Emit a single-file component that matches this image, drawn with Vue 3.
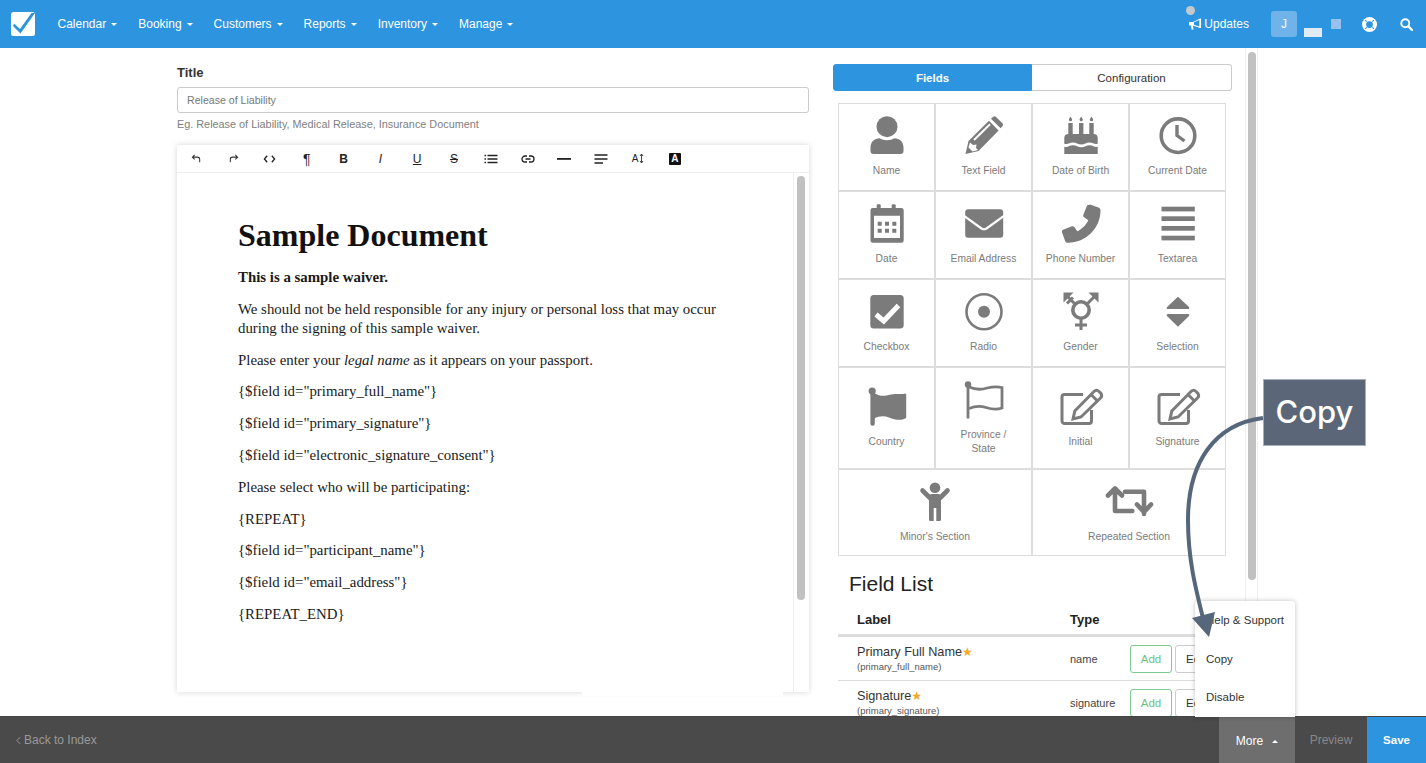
<script setup>
const navItems = ['Calendar', 'Booking', 'Customers', 'Reports', 'Inventory', 'Manage']

const paragraphs = [
  '{$field id="primary_full_name"}',
  '{$field id="primary_signature"}',
  '{$field id="electronic_signature_consent"}',
  'Please select who will be participating:',
  '{REPEAT}',
  '{$field id="participant_name"}',
  '{$field id="email_address"}',
  '{REPEAT_END}'
]

const fields = [
  { label: 'Primary Full Name', key: '(primary_full_name)', type: 'name' },
  { label: 'Signature', key: '(primary_signature)', type: 'signature' }
]
</script>

<template>
  <div class="page">
    <header class="topbar">
      <div class="logo">
        <svg viewBox="0 0 24 24" width="24" height="24">
          <rect width="24" height="24" rx="2.5" fill="#fff" />
          <path d="M3 11.5 l6 5.5 L20.5 1 h3.5 L9.5 21.5 L2 14 Z" fill="#2d95e0" />
        </svg>
      </div>
      <nav class="nav">
        <a v-for="item in navItems" :key="item" class="nav-item">{{ item }}<i class="caret"></i></a>
      </nav>
      <div class="top-right">
        <div class="updates">
          <span class="dot"></span>
          <svg viewBox="0 0 14 14" width="14" height="14">
            <path d="M1 5 L5 5 L12 1.5 L13 1.5 L13 11 L12 11 L5 8.5 L5.5 12.5 L3.5 12.5 L3 8.5 L1 8.5 Z" fill="#fff" />
            <path d="M6 5.3 L11.3 3 L11.3 9.5 L6 7.7 Z" fill="#2d95e0" />
          </svg>
          <span>Updates</span>
        </div>
        <div class="avatar">J</div>
        <span class="ghost-bar"></span>
        <span class="ghost-square"></span>
        <svg class="lifering" viewBox="0 0 16 16" width="15" height="15">
          <circle cx="8" cy="8" r="8" fill="#fff" />
          <circle cx="8" cy="8" r="3.6" fill="#2d95e0" />
          <path d="M3.4 3.4 L5 5 M12.6 3.4 L11 5 M3.4 12.6 L5 11 M12.6 12.6 L11 11" stroke="#2d95e0" stroke-width="1.2" />
        </svg>
        <svg class="search" viewBox="0 0 14 14" width="13" height="13">
          <circle cx="5.7" cy="5.7" r="4.3" fill="none" stroke="#fff" stroke-width="2" />
          <path d="M9 9 L13 13" stroke="#fff" stroke-width="2.4" stroke-linecap="round" />
        </svg>
      </div>
    </header>

    <main class="content">
      <section class="left">
        <label class="title-label">Title</label>
        <div class="title-input">Release of Liability</div>
        <p class="hint">Eg. Release of Liability, Medical Release, Insurance Document</p>

        <div class="editor">
          <div class="toolbar">
            <span class="tool">
              <svg viewBox="0 0 12 12" width="11" height="11"><path d="M4 2 L1.5 4.5 L4 7 M1.5 4.5 H7 Q9.5 4.5 9.5 7 V10" fill="none" stroke="#333" stroke-width="1.1" /></svg>
            </span>
            <span class="tool">
              <svg viewBox="0 0 12 12" width="11" height="11"><path d="M8 2 L10.5 4.5 L8 7 M10.5 4.5 H5 Q2.5 4.5 2.5 7 V10" fill="none" stroke="#333" stroke-width="1.1" /></svg>
            </span>
            <span class="tool">
              <svg viewBox="0 0 14 10" width="13" height="10"><path d="M4.5 1.5 L1.5 5 L4.5 8.5 M9.5 1.5 L12.5 5 L9.5 8.5" fill="none" stroke="#222" stroke-width="1.4" /></svg>
            </span>
            <span class="tool tool-text para">¶</span>
            <span class="tool tool-text bold">B</span>
            <span class="tool tool-text italic">I</span>
            <span class="tool tool-text underline">U</span>
            <span class="tool tool-text strike">S</span>
            <span class="tool">
              <svg viewBox="0 0 14 10" width="14" height="10"><path d="M0.5 1.5 H2 M0.5 5 H2 M0.5 8.5 H2 M3.5 1.5 H13.5 M3.5 5 H13.5 M3.5 8.5 H13.5" stroke="#222" stroke-width="1.4" /></svg>
            </span>
            <span class="tool">
              <svg viewBox="0 0 14 10" width="14" height="10"><path d="M6 2 H4 a3 3 0 0 0 0 6 H6 M8 2 H10 a3 3 0 0 1 0 6 H8 M4.5 5 H9.5" fill="none" stroke="#222" stroke-width="1.3" /></svg>
            </span>
            <span class="tool">
              <svg viewBox="0 0 14 4" width="14" height="4"><rect y="1" width="14" height="1.8" fill="#222" /></svg>
            </span>
            <span class="tool">
              <svg viewBox="0 0 14 10" width="14" height="10"><path d="M0.5 1 H13.5 M0.5 5 H13.5 M0.5 9 H9" stroke="#222" stroke-width="1.5" /></svg>
            </span>
            <span class="tool tool-size">A<svg viewBox="0 0 5 11" width="5" height="11"><path d="M2.5 1 V10 M1 3 L2.5 1 L4 3 M1 8 L2.5 10 L4 8" fill="none" stroke="#333" stroke-width="0.9" /></svg></span>
            <span class="tool"><span class="color-a">A</span></span>
          </div>
          <div class="editor-body">
            <article class="doc">
              <h1>Sample Document</h1>
              <p><strong>This is a sample waiver.</strong></p>
              <p>We should not be held responsible for any injury or personal loss that may occur during the signing of this sample waiver.</p>
              <p>Please enter your <em>legal name</em> as it appears on your passport.</p>
              <p v-for="text in paragraphs" :key="text">{{ text }}</p>
            </article>
            <div class="editor-scroll"><span class="editor-thumb"></span></div>
          </div>
          <span class="editor-tab"></span>
        </div>
      </section>

      <section class="right">
        <div class="tabs">
          <div class="tab active">Fields</div>
          <div class="tab">Configuration</div>
        </div>

        <div class="field-grid">
          <div class="cell">
            <svg viewBox="0 0 40 40" width="40" height="40"><circle cx="20" cy="11.7" r="10.5" /><path d="M3.5 36 v-3.5 c0-5.5 4-9.2 9-9.2 c2 1 4.7 2 7.5 2 s5.5-1 7.5-2 c5 0 9 3.7 9 9.2 V36 a3 3 0 0 1-3 3 H6.5 a3 3 0 0 1-3-3 z" /></svg>
            <span>Name</span>
          </div>
          <div class="cell">
            <svg viewBox="0 0 40 40" width="40" height="40"><path d="M1.5 39 L4.5 26 L25 5.8 L34.6 15.4 L14.5 36 Z" /><path d="M27 3.8 L29.2 1.8 a2 2 0 0 1 2.6 0 L38.6 8.4 a2 2 0 0 1 0 2.6 L36.6 13.2 Z" /><path d="M10 25 L26 9.3" stroke="#fff" stroke-width="2" /><path d="M4.5 32.5 L6 27.5 L9 30 L12.5 29.5 L12 33 L14 35 L8.5 36.5 Z" fill="#fff" /></svg>
            <span>Text Field</span>
          </div>
          <div class="cell">
            <svg viewBox="0 0 40 40" width="40" height="40"><path d="M9.5 1.7 c1 1.2 1.6 2.2 1.6 3 a1.6 1.6 0 0 1-3.2 0 c0-.8.6-1.8 1.6-3 z M20.2 1.7 c1 1.2 1.6 2.2 1.6 3 a1.6 1.6 0 0 1-3.2 0 c0-.8.6-1.8 1.6-3 z M30.5 1.7 c1 1.2 1.6 2.2 1.6 3 a1.6 1.6 0 0 1-3.2 0 c0-.8.6-1.8 1.6-3 z" /><rect x="7.3" y="8" width="4.4" height="12" /><rect x="18" y="8" width="4.4" height="12" /><rect x="28.3" y="8" width="4.4" height="12" /><path d="M3.3 23 a4 4 0 0 1 4-4 h25.4 a4 4 0 0 1 4 4 v5.8 c-3 1-5 -1.3-8.2-1.3 s-5 2-8.2 2 s-5-2-8.4-2 s-5 2.3-8.6 1.3 z" /><path d="M3.3 31.8 c3.6 1 5.2-1.5 8.6-1.5 s5 2 8.4 2 s5-2 8.2-2 s5 2.2 8.2 1.5 V39 H3.3 z" /></svg>
            <span>Date of Birth</span>
          </div>
          <div class="cell">
            <svg viewBox="0 0 40 40" width="40" height="40"><circle cx="20" cy="20.7" r="16.8" fill="none" stroke="#7b7b7b" stroke-width="3.6" /><path d="M19 10 V20.5 L26.5 26" fill="none" stroke="#7b7b7b" stroke-width="3.4" /></svg>
            <span>Current Date</span>
          </div>

          <div class="cell">
            <svg viewBox="0 0 40 40" width="40" height="40" fill-rule="evenodd"><rect x="9.7" y="1.3" width="4" height="8" rx="1.2" /><rect x="24.7" y="1.3" width="4" height="8" rx="1.2" /><path d="M5.8 5 H34.4 a2.3 2.3 0 0 1 2.3 2.3 V37.4 a2.3 2.3 0 0 1-2.3 2.3 H5.8 a2.3 2.3 0 0 1-2.3-2.3 V7.3 a2.3 2.3 0 0 1 2.3-2.3 z M7 12.7 V35 H33 V12.7 z" /><path d="M10.7 18.7 h4 v4 h-4 z M18 18.7 h4 v4 h-4 z M25.3 18.7 h4 v4 h-4 z M10.7 25.7 h4 v4 h-4 z M18 25.7 h4 v4 h-4 z M25.3 25.7 h4 v4 h-4 z" /></svg>
            <span>Date</span>
          </div>
          <div class="cell">
            <svg viewBox="0 0 40 40" width="40" height="40"><rect x="1.2" y="6.3" width="38" height="28.4" rx="3" /><path d="M0 13 L17.5 25.5 Q20 27 22.5 25.5 L40 13" fill="none" stroke="#fff" stroke-width="2.2" /></svg>
            <span>Email Address</span>
          </div>
          <div class="cell">
            <svg viewBox="0 0 40 40" width="40" height="40"><path d="M29 1.5 l8.5 3 c1.5 .5 2 1.5 2 3 C39.5 25 25 39.7 7 39.7 c-1.5 0-2.5-.5-3-2 l-3-8.5 c-.3-1 0-2 1-2.4 l9-3.5 c1-.4 1.8 0 2.3.8 l3 4.2 c4.5-2 9-6.5 11-11 l-4.2-3 c-.8-.5-1.2-1.3-.8-2.3 l3.5-9 c.4-1 1.4-1.3 2.2-.9 z" /></svg>
            <span>Phone Number</span>
          </div>
          <div class="cell">
            <svg viewBox="0 0 40 40" width="40" height="40"><rect x="3.5" y="3.7" width="33.3" height="4.7" /><rect x="3.5" y="13.3" width="33.3" height="4.7" /><rect x="3.5" y="23" width="33.3" height="4.7" /><rect x="3.5" y="32.7" width="33.3" height="4.7" /></svg>
            <span>Textarea</span>
          </div>

          <div class="cell">
            <svg viewBox="0 0 40 40" width="40" height="40"><rect x="3.3" y="4" width="33.4" height="33.4" rx="3.5" /><path d="M9 23.5 L16.7 30 L31.5 14.5" fill="none" stroke="#fff" stroke-width="5" /></svg>
            <span>Checkbox</span>
          </div>
          <div class="cell">
            <svg viewBox="0 0 40 40" width="40" height="40"><circle cx="20" cy="20.7" r="17.5" fill="none" stroke="#7b7b7b" stroke-width="2.6" /><circle cx="20" cy="20.7" r="6" /></svg>
            <span>Radio</span>
          </div>
          <div class="cell">
            <svg viewBox="0 0 40 40" width="40" height="40"><circle cx="20" cy="19" r="8.2" fill="none" stroke="#7b7b7b" stroke-width="3.6" /><path d="M20 27 V39 M14 34 H26 M26 13 L35 4 M14 13 L5 4 M6 12.5 L12 6.5" fill="none" stroke="#7b7b7b" stroke-width="3" /><path d="M27.5 1.5 H37.5 V11.5 Z M2.5 1.5 H12.5 L2.5 11.5 Z" /></svg>
            <span>Gender</span>
          </div>
          <div class="cell">
            <svg viewBox="0 0 40 40" width="40" height="40"><path d="M20 5.7 L31 16 Q32 18 30 18 H10 Q8 18 9 16 Z M10 23 H30 Q32 23 31 25 L20 35.7 L9 25 Q8 23 10 23 Z" /></svg>
            <span>Selection</span>
          </div>

          <div class="cell tall">
            <svg viewBox="0 0 40 40" width="40" height="40"><circle cx="5.2" cy="5" r="3.6" /><rect x="3.4" y="5" width="4.4" height="34.7" rx="2" /><path d="M7 7 C14 11 17 10 24 8.5 C30 7.5 35 8.5 39.2 7.5 V32 C34 35 28 34 22 31.5 C17 29.5 12 30 7 32.5 Z" /></svg>
            <span>Country</span>
          </div>
          <div class="cell tall">
            <svg viewBox="0 0 40 40" width="40" height="40"><circle cx="4" cy="5.5" r="3.2" /><path d="M4 6 V38.3" stroke="#7b7b7b" stroke-width="2.8" stroke-linecap="round" fill="none" /><path d="M5 8 C12 11 17 11 23 9 C29 7.5 34 7.5 38 8.5 V29 C33 31 28 30.5 22 28.5 C16 26.5 11 27 5 29.5" fill="none" stroke="#7b7b7b" stroke-width="2.8" /></svg>
            <span>Province /<br />State</span>
          </div>
          <div class="cell tall">
            <svg class="free" viewBox="0 0 40 40" width="40" height="40"><path d="M22 8.5 H3.5 a2.5 2.5 0 0 0-2.5 2.5 V35 a2.5 2.5 0 0 0 2.5 2.5 H28 a2.5 2.5 0 0 0 2.5-2.5 V24" fill="none" stroke="#7b7b7b" stroke-width="3" /><path d="M12 33 L13.8 25 L33 5.5 Q35.5 3 38 5.5 L40 7.5 Q41.5 10 39.5 12 L20 31 Z M30 8.5 L36.5 15" fill="none" stroke="#7b7b7b" stroke-width="3" /></svg>
            <span>Initial</span>
          </div>
          <div class="cell tall">
            <svg class="free" viewBox="0 0 40 40" width="40" height="40"><path d="M22 8.5 H3.5 a2.5 2.5 0 0 0-2.5 2.5 V35 a2.5 2.5 0 0 0 2.5 2.5 H28 a2.5 2.5 0 0 0 2.5-2.5 V24" fill="none" stroke="#7b7b7b" stroke-width="3" /><path d="M12 33 L13.8 25 L33 5.5 Q35.5 3 38 5.5 L40 7.5 Q41.5 10 39.5 12 L20 31 Z M30 8.5 L36.5 15" fill="none" stroke="#7b7b7b" stroke-width="3" /></svg>
            <span>Signature</span>
          </div>

          <div class="cell wide">
            <svg viewBox="0 0 40 40" width="40" height="40"><circle cx="20" cy="6.7" r="5.3" /><path d="M14 25 V39 a1.6 1.6 0 0 0 1.6 1 H18.7 V27 H21.3 V40 H24.4 a1.6 1.6 0 0 0 1.6-1 V16 a3 3 0 0 0-3-3 H17 a3 3 0 0 0-3 3 z" /><path d="M7.5 9.5 L15 17 M32.5 9.5 L25 17" stroke="#7b7b7b" stroke-width="4.6" stroke-linecap="round" fill="none" /></svg>
            <span>Minor's Section</span>
          </div>
          <div class="cell wide">
            <svg class="free" viewBox="0 0 40 40" width="40" height="40"><path d="M-1 14.5 L6 7.5 L13 14.5 M6 8 V30 H23.3 M16 10.7 H35 V33 M28 23.5 L35 31 L42 23.5" fill="none" stroke="#7b7b7b" stroke-width="4.6" stroke-linejoin="round" stroke-linecap="round" /></svg>
            <span>Repeated Section</span>
          </div>
        </div>

        <h2 class="list-title">Field List</h2>
        <div class="list">
          <div class="list-head">
            <span class="col-label">Label</span>
            <span class="col-type">Type</span>
          </div>
          <div v-for="f in fields" :key="f.key" class="list-row">
            <div class="col-label">
              <div class="field-name">{{ f.label }}<span class="star">★</span></div>
              <div class="field-key">{{ f.key }}</div>
            </div>
            <div class="col-type">{{ f.type }}</div>
            <div class="col-actions">
              <span class="btn btn-add">Add</span>
              <span class="btn btn-edit">Edit</span>
            </div>
          </div>
        </div>
      </section>

      <div class="page-scroll"><span class="page-thumb"></span></div>
    </main>

    <footer class="bottombar">
      <a class="back">
        <svg viewBox="0 0 6 10" width="5" height="9"><path d="M5 1 L1 5 L5 9" fill="none" stroke="#999" stroke-width="1.2" /></svg>
        Back to Index
      </a>
      <div class="bottom-actions">
        <div class="more">
          More<i class="caret-up"></i>
          <div class="menu">
            <a>Help &amp; Support</a>
            <a>Copy</a>
            <a>Disable</a>
          </div>
        </div>
        <div class="preview">Preview</div>
        <div class="save">Save</div>
      </div>
    </footer>

    <!-- annotation on top of the screenshot -->
    <div class="callout">Copy</div>
    <svg class="arrow" viewBox="0 0 1426 763" width="1426" height="763">
      <path d="M1263 418 C1215 424 1188 462 1188 520 C1188 560 1196 590 1204 622" fill="none" stroke="#56667b" stroke-width="4" />
      <path d="M1192 618 L1215 612 L1209 637 Z" fill="#56667b" />
    </svg>
  </div>
</template>

<style>
html, body {
  margin: 0;
  padding: 0;
  background: #fff;
}
</style>

<style scoped>
.page {
  position: relative;
  width: 1426px;
  height: 763px;
  display: flex;
  flex-direction: column;
  overflow: hidden;
  font-family: "Liberation Sans", Arial, sans-serif;
  color: #222;
}

/* top bar */
.topbar {
  height: 48px;
  flex: none;
  display: flex;
  align-items: center;
  background: #2d95e0;
  color: #fff;
  font-size: 12px;
  padding-left: 11px;
}
.logo {
  height: 24px;
  margin-right: 22.5px;
}
.nav {
  display: flex;
  gap: 21px;
}
.nav-item {
  display: flex;
  align-items: center;
  line-height: 16px;
}
.caret {
  width: 0;
  height: 0;
  margin-left: 5px;
  border-left: 3px solid transparent;
  border-right: 3px solid transparent;
  border-top: 3px solid #fff;
}
.top-right {
  margin-left: auto;
  display: flex;
  align-items: center;
  padding-right: 13px;
}
.updates {
  position: relative;
  display: flex;
  align-items: center;
  gap: 2px;
}
.dot {
  position: absolute;
  left: -2px;
  top: -11px;
  width: 9px;
  height: 9px;
  border-radius: 50%;
  background: #c4c9ce;
}
.avatar {
  width: 26px;
  height: 26px;
  margin-left: 22px;
  border-radius: 3px;
  background: #6fb3ea;
  text-align: center;
  line-height: 26px;
  font-size: 12px;
}
.ghost-bar {
  width: 18px;
  height: 9px;
  margin: 17px 0 0 7px;
  background: #e1ebf8;
}
.ghost-square {
  width: 10px;
  height: 10px;
  margin-left: 9px;
  background: #97c0ee;
}
.lifering {
  margin-left: 21px;
}
.search {
  margin-left: 23px;
}

/* main */
.content {
  flex: 1;
  min-height: 0;
  display: flex;
  overflow: hidden;
  padding-left: 177px;
}
.left {
  width: 632px;
  flex: none;
  padding-top: 17px;
}
.title-label {
  display: block;
  font-size: 13px;
  font-weight: 700;
  line-height: 15px;
  color: #333;
}
.title-input {
  box-sizing: border-box;
  height: 26px;
  margin-top: 7px;
  padding: 0 9px;
  border: 1px solid #ccc;
  border-radius: 3px;
  font-size: 10.6px;
  line-height: 24px;
  color: #777;
}
.hint {
  margin: 5px 0 0;
  font-size: 10.85px;
  line-height: 13px;
  color: #808080;
}
.editor {
  position: relative;
  margin-top: 14px;
  height: 547px;
  display: flex;
  flex-direction: column;
  box-shadow: 0 0 6px rgba(0, 0, 0, 0.16);
}
.toolbar {
  height: 27px;
  flex: none;
  display: flex;
  align-items: center;
  padding-left: 1px;
  border-bottom: 1px solid #eee;
}
.tool {
  width: 36.8px;
  display: flex;
  align-items: center;
  justify-content: center;
  font-size: 11px;
  color: #222;
}
.tool-text {
  font-size: 12px;
  line-height: 14px;
}
.para {
  font-size: 14px;
}
.bold { font-weight: 700; }
.italic { font-style: italic; }
.underline { text-decoration: underline; }
.strike { text-decoration: line-through; }
.tool-size {
  font-size: 10px;
  gap: 1px;
}
.color-a {
  width: 12px;
  height: 12px;
  background: #111;
  color: #fff;
  border-radius: 1px;
  font-size: 10px;
  font-weight: 700;
  text-align: center;
  line-height: 12px;
}
.editor-body {
  flex: 1;
  min-height: 0;
  display: flex;
}
.doc {
  flex: 1;
  padding: 42px 72px 0 61px;
  font-family: "Liberation Serif", "Times New Roman", serif;
  font-size: 14.85px;
  line-height: 19px;
  color: #1a1a1a;
}
.doc h1 {
  margin: 0 0 13px;
  font-size: 32px;
  line-height: 40px;
  font-weight: 700;
  color: #111;
}
.doc p {
  margin: 0 0 12.8px;
}
.editor-scroll {
  width: 16px;
  flex: none;
  box-sizing: border-box;
  padding: 3px 3px 0 3px;
  border-left: 1px solid #eee;
}
.editor-thumb {
  display: block;
  width: 8px;
  height: 424px;
  border-radius: 4px;
  background: #c1c1c1;
}
.editor-tab {
  position: absolute;
  left: 405px;
  bottom: -4px;
  width: 201px;
  height: 6px;
  background: #fff;
}

.right {
  width: 399px;
  flex: none;
  margin-left: 24px;
  padding-top: 16px;
}
.tabs {
  display: flex;
  height: 27px;
}
.tab {
  width: 200px;
  box-sizing: border-box;
  border: 1px solid #ccc;
  border-left: none;
  border-radius: 0 3px 3px 0;
  text-align: center;
  font-size: 11.5px;
  line-height: 26px;
  color: #333;
}
.tab.active {
  width: 199px;
  background: #2d95e0;
  border: 1px solid #2d95e0;
  border-radius: 3px 0 0 3px;
  color: #fff;
  font-weight: 700;
}
.field-grid {
  width: 388px;
  margin: 12px 0 0 5px;
  display: grid;
  grid-template-columns: repeat(4, 97px);
  grid-template-rows: 88px 88px 88px 102px 87px;
}
.cell {
  box-sizing: border-box;
  border: 1px solid #ddd;
  display: flex;
  flex-direction: column;
  align-items: center;
  justify-content: center;
  gap: 9px;
  padding-bottom: 2px;
  font-size: 10.3px;
  line-height: 14px;
  color: #7b7b7b;
  text-align: center;
}
.cell svg {
  fill: #7b7b7b;
  flex: none;
}
.cell svg.free {
  overflow: visible;
}
.wide {
  grid-column: span 2;
  padding-bottom: 1px;
}
.list-title {
  margin: 16px 0 0 16px;
  font-size: 21px;
  line-height: 24px;
  font-weight: 400;
  color: #222;
}
.list {
  width: 388px;
  margin: 9px 0 0 5px;
}
.list-head {
  display: flex;
  align-items: center;
  height: 29px;
  border-bottom: 3px solid #ddd;
  font-size: 13px;
  font-weight: 700;
  color: #222;
}
.list-row {
  display: flex;
  align-items: center;
  height: 43px;
  border-bottom: 1px solid #ddd;
  white-space: nowrap;
}
.col-label {
  width: 232px;
  flex: none;
  box-sizing: border-box;
  padding-left: 19px;
}
.col-type {
  width: 60px;
  flex: none;
  font-size: 11px;
  color: #444;
}
.list-head .col-type {
  font-size: 13px;
  color: #222;
}
.field-name {
  font-size: 12.7px;
  line-height: 15px;
  color: #333;
}
.star {
  font-size: 12px;
  line-height: 12px;
  color: #f5a623;
  font-family: "DejaVu Sans", sans-serif;
}
.field-key {
  font-size: 9.5px;
  line-height: 13px;
  color: #555;
}
.col-actions {
  display: flex;
  gap: 3px;
}
.btn {
  box-sizing: border-box;
  width: 42px;
  height: 28px;
  border: 1px solid #ccc;
  border-radius: 3px;
  text-align: center;
  font-size: 11.5px;
  line-height: 26px;
  color: #333;
}
.btn-add {
  border-color: #7ccb93;
  color: #6cc285;
}
.page-scroll {
  width: 13px;
  flex: none;
  box-sizing: border-box;
  margin-left: 13px;
  padding: 4px 2px 0 2px;
  border-left: 1px solid #eee;
  border-right: 1px solid #eee;
}
.page-thumb {
  display: block;
  width: 8px;
  height: 528px;
  border-radius: 4px;
  background: #c1c1c1;
}

/* bottom bar */
.bottombar {
  height: 47px;
  flex: none;
  display: flex;
  align-items: stretch;
  justify-content: space-between;
  box-sizing: border-box;
  background: #4a4a4a;
  border-top: 1px solid #444;
  position: relative;
  font-size: 12px;
}
.back {
  display: flex;
  align-items: center;
  gap: 3px;
  padding-left: 16px;
  color: #999;
}
.bottom-actions {
  display: flex;
}
.more {
  position: relative;
  box-sizing: border-box;
  width: 76px;
  display: flex;
  align-items: center;
  justify-content: center;
  padding-top: 2px;
  background: #6e6e6e;
  color: #fff;
}
.caret-up {
  width: 0;
  height: 0;
  margin-left: 9px;
  border-left: 3.5px solid transparent;
  border-right: 3.5px solid transparent;
  border-bottom: 3.5px solid #fff;
}
.menu {
  position: absolute;
  right: 0;
  bottom: 100%;
  box-sizing: border-box;
  width: 100px;
  height: 116px;
  padding-top: 0;
  background: #fff;
  border-radius: 3px 3px 0 0;
  box-shadow: 0 0 5px rgba(0, 0, 0, 0.25);
  color: #333;
  font-size: 11.5px;
}
.menu a {
  display: block;
  height: 38.5px;
  padding-left: 11px;
  line-height: 38.5px;
}
.preview {
  width: 72px;
  text-align: center;
  line-height: 46px;
  color: #888;
}
.save {
  width: 59px;
  text-align: center;
  line-height: 46px;
  background: #2d95e0;
  color: #fff;
  font-size: 11.5px;
  font-weight: 700;
}

/* annotation */
.callout {
  position: absolute;
  left: 1263px;
  top: 379px;
  box-sizing: border-box;
  width: 103px;
  height: 67px;
  background: #5b6778;
  border: 1px solid #a9b0ba;
  color: #fff;
  font-family: Inter, sans-serif;
  font-size: 31px;
  font-weight: 500;
  line-height: 64px;
  text-align: center;
}
.arrow {
  position: absolute;
  left: 0;
  top: 0;
  pointer-events: none;
}
</style>
